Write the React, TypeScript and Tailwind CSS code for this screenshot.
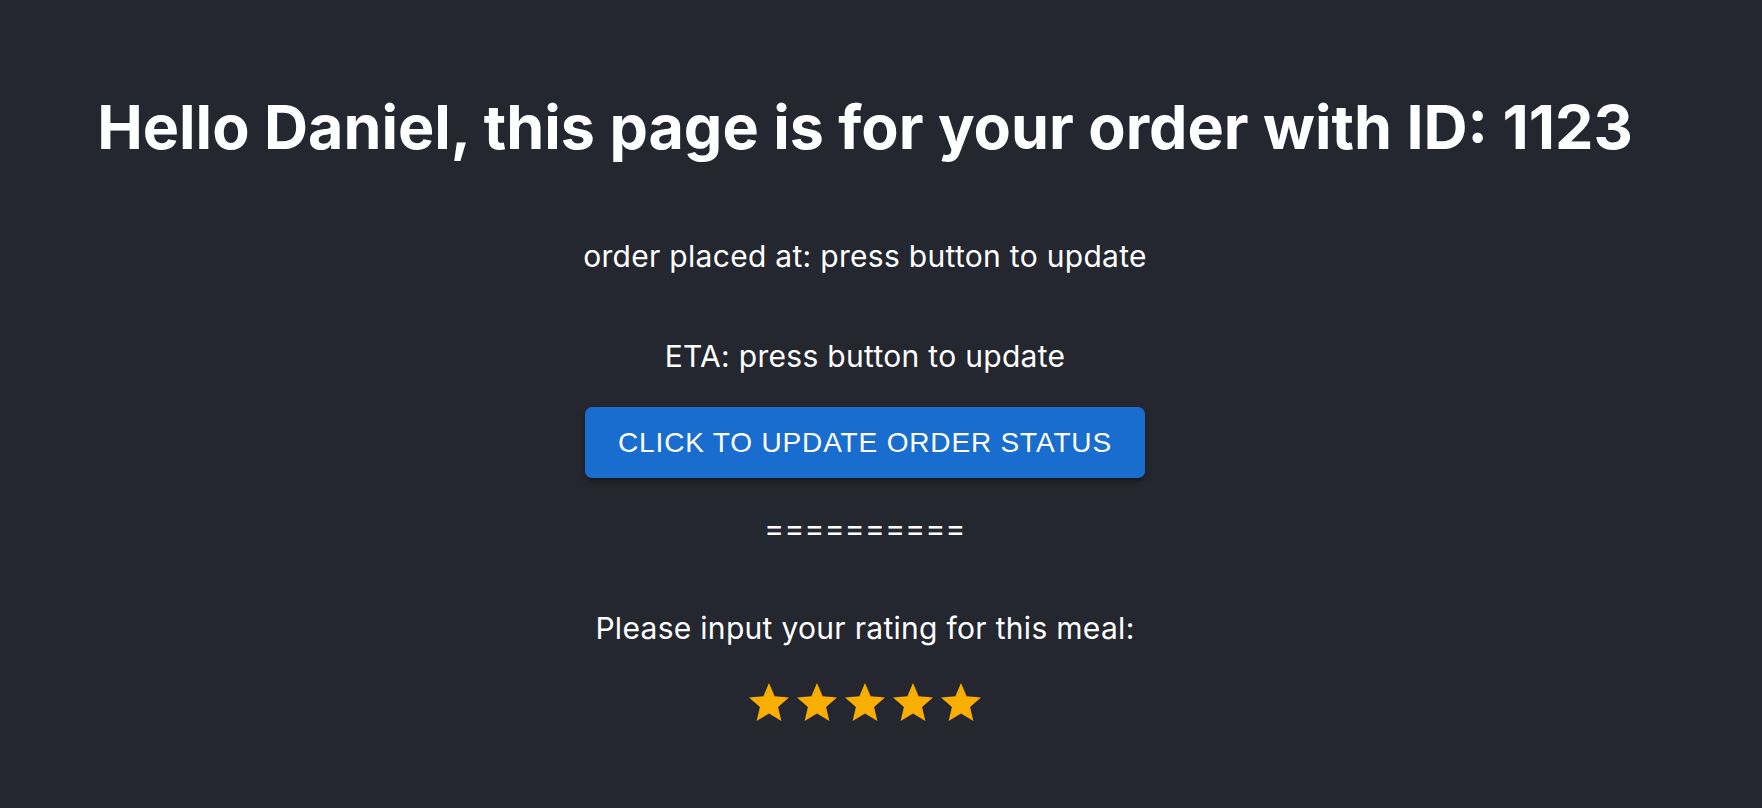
const StarIcon = () => (
  <svg viewBox="0 0 24 24" className="w-[48px] h-[48px] fill-[#faaf00]">
    <path d="M12 17.27 18.18 21l-1.64-7.03L22 9.24l-7.19-.61L12 2 9.19 8.63 2 9.24l5.46 4.73L5.82 21z" />
  </svg>
);

const App = () => {
  const stars = [1, 2, 3, 4, 5];

  return (
    <div className="min-h-[808px] w-full bg-[#24272f] text-white font-['Inter',sans-serif]">
      <div className="flex flex-col items-center pr-[32px] pt-[97px]">
        <h1 className="text-[61px] leading-[60px] font-bold">
          Hello Daniel, this page is for your order with ID: 1123
        </h1>

        <p className="mt-[85px] text-[30px] leading-[28px] tracking-[0.01em]">order placed at: press button to update</p>
        <p className="mt-[72px] text-[30px] leading-[28px] tracking-[0.01em]">ETA: press button to update</p>

        <button className="mt-[37px] h-[71px] px-[33px] rounded-[7px] bg-[#196dce] text-white uppercase font-['Liberation_Sans',Arial,sans-serif] text-[28px] tracking-[0.03em] shadow-[0_6px_2px_-4px_rgba(0,0,0,0.2),0_4px_4px_0_rgba(0,0,0,0.14),0_2px_10px_0_rgba(0,0,0,0.12)]">
          Click to update order status
        </button>

        <p className="mt-[36px] text-[30px] leading-[28px] tracking-[0.01em]">==========</p>

        <p className="mt-[72px] text-[30px] leading-[28px] tracking-[0.01em]">Please input your rating for this meal:</p>

        <div className="mt-[37px] flex">
          {stars.map((s) => (
            <StarIcon key={s} />
          ))}
        </div>
      </div>
    </div>
  );
};

export default App;
